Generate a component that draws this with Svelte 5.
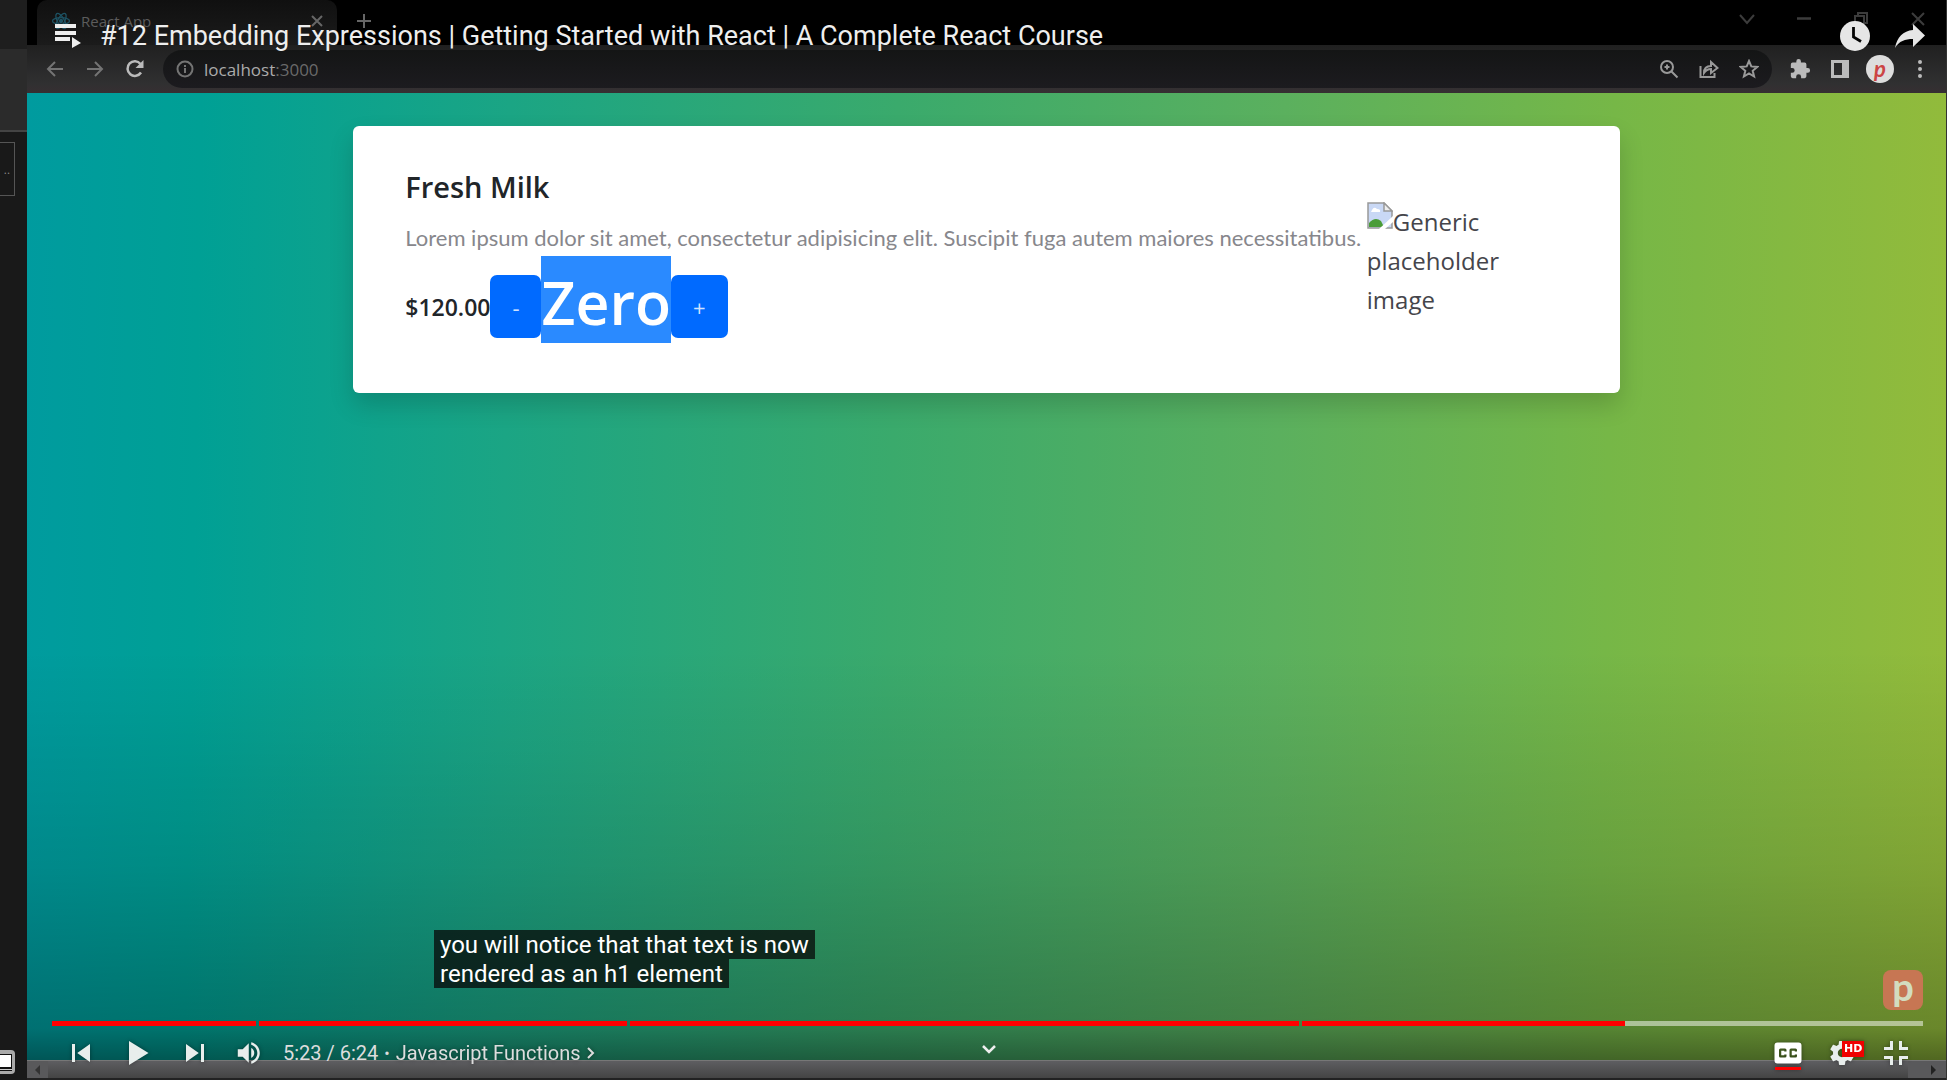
<script>
  const chapters = [
    { share: 204, played: 100 },
    { share: 369, played: 100 },
    { share: 669, played: 100 },
    { share: 622, played: 52 },
  ];
  const captions = ['you will notice that that text is now', 'rendered as an h1 element'];
</script>

<div class="screen">
  <aside class="editor" aria-label="Editor">
    <div class="editor-top"></div>
    <div class="editor-tabs"></div>
    <div class="editor-body">
      <div class="editor-box">..</div>
      <svg class="editor-icon" width="15" height="24" viewBox="0 0 15 24"><path d="M0 0h11q4 0 4 4v16q0 4-4 4H0z" fill="#aaa" /><path d="M0 4h12v17H0z" fill="#111" /><path d="M0 5h11v12H0z" fill="#fff" /><path d="M0 19h12v1H0z" fill="#ccc" /></svg>
    </div>
  </aside>

  <main class="player">
    <div class="browser">
      <div class="tabs">
        <div class="tab">
          <svg width="20" height="20" viewBox="0 0 20 20" fill="none" stroke="#1d5263" stroke-width="1.3"><ellipse cx="10" cy="10" rx="8.5" ry="3.4" /><ellipse cx="10" cy="10" rx="8.5" ry="3.4" transform="rotate(60 10 10)" /><ellipse cx="10" cy="10" rx="8.5" ry="3.4" transform="rotate(120 10 10)" /><circle cx="10" cy="10" r="1.5" fill="#1d5263" /></svg>
          <span class="tab-name">React App</span>
          <button aria-label="Close tab"><svg width="12" height="12" viewBox="0 0 12 12"><path d="M1 1l10 10M11 1L1 11" stroke="#666" stroke-width="2" /></svg></button>
        </div>
        <button class="new-tab" aria-label="New tab"><svg width="16" height="16" viewBox="0 0 16 16"><path d="M8 1v14M1 8h14" stroke="#666" stroke-width="2" /></svg></button>
        <div class="window-buttons">
          <button aria-label="Search tabs"><svg width="16" height="16" viewBox="0 0 16 16"><path d="M1 4l7 8 7-8" /></svg></button>
          <button aria-label="Minimize"><svg width="16" height="16" viewBox="0 0 16 16"><path d="M1 7.500h14" stroke-width="2.500" /></svg></button>
          <button aria-label="Restore"><svg width="16" height="16" viewBox="0 0 16 16"><path d="M2 5h9v10H2zM5 5V2h9v10h-3" /></svg></button>
          <button aria-label="Close"><svg width="16" height="16" viewBox="0 0 16 16"><path d="M2 2l12 12M14 2L2 14" /></svg></button>
        </div>
      </div>
      <div class="toolbar">
        <button aria-label="Back"><svg width="18" height="18" viewBox="0 0 18 18" class="dim"><path d="M17 9H2M9 2L2 9l7 7" /></svg></button>
        <button aria-label="Forward"><svg width="18" height="18" viewBox="0 0 18 18" class="dim"><path d="M1 9h15M9 2l7 7-7 7" /></svg></button>
        <button aria-label="Reload"><svg width="20" height="20" viewBox="0 0 20 20" class="bright"><path d="M16 13.500A7.300 7.300 0 1 1 15.500 5" stroke-width="2.500" /><path d="M18.500 1v8h-8z" fill="#bbb" stroke="none" /></svg></button>
        <div class="address">
          <svg width="18" height="18" viewBox="0 0 18 18" class="dim"><circle cx="9" cy="9" r="7.500" /><path d="M9 8v5M9 5v2" /></svg>
          <span class="url">localhost<span>:3000</span></span>
          <button aria-label="Zoom"><svg width="20" height="20" viewBox="0 0 20 20"><circle cx="8" cy="8" r="6" /><path d="M12.500 12.500l6 6M8 5.500v5M5.500 8h5" /></svg></button>
          <button aria-label="Share page"><svg width="20" height="20" viewBox="0 0 20 20"><path d="M1.500 7v11h14v-4M5 14c0-5 3-7 7-7V3l6.500 6-6.500 5v-4c-3 0-5 1-7 4z" /></svg></button>
          <button aria-label="Bookmark"><svg width="20" height="20" viewBox="0 0 20 20"><path d="M10 2l2.300 5.400 5.900.5-4.500 3.900 1.400 5.700-5.100-3-5.100 3 1.400-5.700L1.800 7.900l5.900-.5z" /></svg></button>
        </div>
        <div class="extensions">
          <button aria-label="Extensions"><svg width="22" height="22" viewBox="0 0 24 24"><path fill="#bbb" stroke="none" d="M20.500 11H19V7a2 2 0 0 0-2-2h-4V3.500a2.500 2.500 0 0 0-5 0V5H4a2 2 0 0 0-2 2v3.800h1.500a2.700 2.700 0 0 1 0 5.400H2V20a2 2 0 0 0 2 2h3.800v-1.500a2.700 2.700 0 0 1 5.400 0V22H17a2 2 0 0 0 2-2v-4h1.500a2.500 2.500 0 0 0 0-5z" /></svg></button>
          <button aria-label="Side panel"><svg width="20" height="20" viewBox="0 0 20 20"><path fill="#bbb" fill-rule="evenodd" stroke="none" d="M1 1h18v18H1zM4 4v12h8V4z" /></svg></button>
          <button class="avatar" aria-label="Profile">p</button>
          <button aria-label="Menu"><svg width="20" height="20" viewBox="0 0 20 20"><g fill="#bbb" stroke="none"><circle cx="10" cy="3" r="2" /><circle cx="10" cy="10" r="2" /><circle cx="10" cy="17" r="2" /></g></svg></button>
        </div>
      </div>

      <div class="page">
        <article class="card">
          <div class="details">
            <h2>Fresh Milk</h2>
            <p>Lorem ipsum dolor sit amet, consectetur adipisicing elit. Suscipit fuga autem maiores necessitatibus.</p>
            <div class="quantity">
              <span class="price">$120.00</span>
              <button class="minus">-</button>
              <h1>Zero</h1>
              <button class="plus">+</button>
            </div>
          </div>
          <div class="picture">
            <svg width="26" height="27" viewBox="0 0 26 27"><path d="M1 1h16l8 8v17H1z" fill="#c9d8f5" stroke="#999" stroke-width="1.500" /><path d="M5 8q2-4 5-1 4 0 3 3H4z" fill="#fff" /><path d="M2 25v-4q6-7 12-2l3 6z" fill="#4a9c38" /><path d="M17 1v8h8z" fill="#eee" stroke="#999" stroke-width="1.500" /><path d="M12 27L26 14v6l-8 7z" fill="#fff" /></svg>Generic placeholder image
          </div>
        </article>
      </div>
      <div class="scrollbar">
        <span><svg width="6" height="10" viewBox="0 0 6 10"><path d="M5 0v10L0 5z" fill="#333" /></svg></span>
        <span class="end"><svg width="6" height="10" viewBox="0 0 6 10"><path d="M0 0v10l5-5z" fill="#222" /></svg></span>
      </div>
    </div>

    <header class="top-bar">
      <button aria-label="Playlist"><svg width="28" height="26" viewBox="0 0 28 26"><path d="M1 1h21v4H1zM1 8h21v4H1zM1 14h15v4H1zM18 14v11l9-5z" fill="#eee" /></svg></button>
      <a href="#video">#12 Embedding Expressions | Getting Started with React | A Complete React Course</a>
      <button aria-label="Watch later"><svg width="30" height="30" viewBox="0 0 30 30"><circle cx="15" cy="15" r="15" fill="#e6e6e6" /><path d="M13.500 6v10l7.500 4.500" fill="none" stroke="#050505" stroke-width="2.800" /></svg></button>
      <button aria-label="Share"><svg width="32" height="30" viewBox="0 0 32 30"><path d="M19 3l12 11.500L19 26v-8C11 18 5 20 1 27 3 16 9 10 19 9z" fill="#e6e6e6" /></svg></button>
    </header>

    <footer class="controls">
      <div class="caption">
        {#each captions as line}<span>{line}</span>{/each}
      </div>
      <div class="watermark">p</div>
      <div class="progress">
        {#each chapters as chapter}
          <div class="chapter" style="flex-grow: {chapter.share}"><div style="width: {chapter.played}%"></div></div>
        {/each}
      </div>
      <div class="buttons">
        <div class="group">
          <button aria-label="Previous"><svg viewBox="0 0 36 36"><path d="m12 12h2v12h-2zm3.500 6 8.500 6V12z" /></svg></button>
          <button aria-label="Play"><svg viewBox="0 0 36 36"><path d="M12 10v16l13-8z" /></svg></button>
          <button aria-label="Next"><svg viewBox="0 0 36 36"><path d="M12 24l8.500-6L12 12zM22 12v12h2V12z" /></svg></button>
          <button class="volume" aria-label="Mute"><svg viewBox="0 0 36 36"><path d="M8 21h4l5 5V10l-5 5H8zM19 14v8c1.480-.68 2.500-2.230 2.500-4s-1.020-3.260-2.500-4zM19 11.290c2.890.86 5 3.540 5 6.710s-2.110 5.850-5 6.710v2.060c4.010-.91 7-4.490 7-8.770s-2.990-7.860-7-8.770z" /></svg></button>
          <span class="time">5:23 / 6:24</span>
          <span class="dot">•</span>
          <button class="chapter-name">Javascript Functions <svg width="9" height="14" viewBox="0 0 9 14"><path d="M1 2l5 5-5 5" fill="none" stroke="#ddd" stroke-width="2" /></svg></button>
        </div>
        <button class="more" aria-label="More videos"><svg width="14" height="10" viewBox="0 0 14 10"><path d="M1 2l6 6 6-6" fill="none" stroke="#eee" stroke-width="2.500" /></svg></button>
        <div class="group right">
          <button class="cc" aria-label="Subtitles"><svg viewBox="0 0 36 36"><path fill="#fff" fill-rule="evenodd" d="M11 11a2 2 0 0 0-2 2v10a2 2 0 0 0 2 2h14a2 2 0 0 0 2-2V13a2 2 0 0 0-2-2zM17 17h-1.500v-.5h-2v3h2V19H17v1a1 1 0 0 1-1 1h-3a1 1 0 0 1-1-1v-4a1 1 0 0 1 1-1h3a1 1 0 0 1 1 1zM24 17h-1.500v-.5h-2v3h2V19H24v1a1 1 0 0 1-1 1h-3a1 1 0 0 1-1-1v-4a1 1 0 0 1 1-1h3a1 1 0 0 1 1 1z" /></svg></button>
          <button class="settings" aria-label="Settings"><svg viewBox="0 0 36 36"><path d="m23.940 18.780c.03-.25.05-.51.05-.78 0-.27-.02-.52-.05-.78l1.680-1.320c.15-.12.19-.33.09-.51l-1.600-2.760c-.09-.17-.31-.24-.48-.17l-1.990.8c-.41-.32-.86-.58-1.350-.78l-.30-2.120c-.02-.19-.19-.33-.39-.33l-3.200 0c-.2 0-.36.14-.39.33l-.30 2.120c-.48.2-.93.47-1.350.78l-1.990-.8c-.18-.07-.39 0-.48.17l-1.600 2.760c-.10.17-.05.39.09.51l1.680 1.320c-.03.25-.05.52-.05.78 0 .26.02.52.05.78l-1.680 1.320c-.15.12-.19.33-.09.51l1.600 2.760c.09.17.31.24.48.17l1.990-.8c.41.32.86.58 1.350.78l.30 2.120c.02.19.19.33.39.33l3.200 0c.2 0 .36-.14.39-.33l.30-2.120c.48-.2.93-.47 1.350-.78l1.990.8c.18.07.39 0 .48-.17l1.600-2.760c.09-.17.05-.39-.09-.51l-1.680-1.320zm-5.940 2.010c-1.540 0-2.800-1.250-2.800-2.800 0-1.540 1.250-2.800 2.800-2.800 1.540 0 2.800 1.250 2.800 2.800 0 1.540-1.250 2.800-2.800 2.800z" /></svg><span class="hd">HD</span></button>
          <button aria-label="Exit full screen"><svg viewBox="0 0 36 36"><path d="M14 14h-4v2h6v-6h-2zM22 14v-4h-2v6h6v-2zM20 26h2v-4h4v-2h-6zM10 22h4v4h2v-6h-6z" /></svg></button>
        </div>
      </div>
    </footer>
  </main>
</div>

<style>
  :global(body) { background: #000; }
  .screen { display: flex; min-height: 100vh; font-family: Roboto, sans-serif; }
  button { display: flex; align-items: center; justify-content: center; border: 0; padding: 0; background: none; color: inherit; font: inherit; cursor: pointer; }
  svg { flex: none; }

  .editor { display: flex; flex-direction: column; flex: none; width: 27px; background: #191919; }
  .editor-top { height: 49px; background: #1e1e1e; }
  .editor-tabs { height: 81px; background: #2b2b2b; border-bottom: 2px solid #444; }
  .editor-body { display: flex; flex: 1; flex-direction: column; justify-content: space-between; align-items: flex-start; padding: 10px 0 6px; }
  .editor-box { width: 14px; height: 52px; border: 1px solid #555; border-left: 0; color: #888; font-size: 12px; line-height: 54px; text-align: center; }

  .player { position: relative; display: flex; flex: 1; min-width: 0; border-right: 1px solid #333; }
  .browser { display: flex; flex: 1; flex-direction: column; min-width: 0; font-family: "Open Sans", "Noto Sans", sans-serif; }
  .tabs { display: flex; height: 45px; background: #000; color: #5c5c5c; }
  .tab { display: flex; align-items: center; gap: 10px; box-sizing: border-box; width: 300px; margin-left: 10px; padding: 0 14px 4px; border-radius: 10px 10px 0 0; background: linear-gradient(#101010, #1b1b1b); font-size: 15px; }
  .tab-name { flex: 1; }
  .new-tab { width: 54px; padding-bottom: 4px; }
  .window-buttons { display: flex; margin-left: auto; padding: 0 0 8px; }
  .window-buttons button { width: 57px; }
  .window-buttons svg { fill: none; stroke: #3c3c3c; stroke-width: 2; }
  .toolbar { display: flex; align-items: center; height: 48px; padding: 0 0 0 8px; background: linear-gradient(#202020, #303031 80%, #362f32); }
  .toolbar > button { width: 40px; }
  .toolbar svg { fill: none; stroke: #999; stroke-width: 2; }
  .toolbar .dim { stroke: #747474; }
  .toolbar .bright { stroke: #bbb; }
  .address { display: flex; flex: 1; align-items: center; height: 38px; margin-left: 8px; padding: 0 3px 0 13px; border-radius: 19px; background: linear-gradient(#141515, #1c1b1f); }
  .address button { width: 40px; }
  .url { flex: 1; margin-left: 10px; color: #ababab; font-size: 17px; }
  .url span { color: #6a6a6a; }
  .extensions { display: flex; align-items: center; padding: 0 6px 0 8px; }
  .extensions button { width: 40px; }
  .extensions .avatar { width: 28px; height: 28px; margin: 0 6px; border-radius: 50%; background: #ddd; color: #c44; font: italic 700 22px/24px Lato, sans-serif; }

  .page { display: flex; flex: 1; align-items: flex-start; justify-content: center; padding-top: 33px; background: linear-gradient(91deg, #009b9f 0%, #00a095 9%, #1ba584 25%, #3aaa6c 45%, #5bb05e 65%, #76b747 82%, #93bb3b 100%); }
  .card { display: flex; align-items: center; box-sizing: border-box; width: 66%; padding: 42px 53px 36px 52px; border-radius: 6px; background: #fff; box-shadow: 0 12px 24px rgba(0, 0, 0, 0.16); color: #212529; }
  .details { flex: 1; min-width: 0; }
  h1, h2, p { margin: 0; }
  h2 { margin-bottom: 14px; font-size: 29px; font-weight: 600; line-height: 38px; }
  p { color: #87878c; font-family: Lato, sans-serif; font-size: 22px; line-height: 36px; white-space: nowrap; }
  .quantity { display: flex; align-items: center; }
  .price { font-size: 23px; font-weight: 600; }
  h1 { margin-bottom: 14px; padding-top: 5px; background: #2a8aff; color: #fff; font-size: 59px; font-weight: 600; line-height: 82px; }
  .quantity button { height: 63px; border-radius: 7px; background: #006aff; color: #cfe2ff; font-size: 22px; }
  .minus { width: 51px; }
  .plus { width: 57px; }
  .picture { width: 147px; padding: 0 53px 5px 0; color: #45454b; font-size: 24px; line-height: 39px; }
  .picture svg { vertical-align: 2px; }
  .scrollbar { display: flex; justify-content: space-between; height: 17px; border-top: 1px solid #777; border-bottom: 2px solid #222; background: linear-gradient(#5e5e61, #444); }
  .scrollbar span { display: flex; align-items: center; justify-content: center; width: 21px; background: #59595b; }
  .scrollbar .end { width: 24px; padding-left: 14px; }

  .top-bar { position: absolute; inset: 0 0 auto; display: flex; align-items: center; height: 60px; padding: 12px 20px 0 27px; box-sizing: border-box; gap: 24px; }
  .top-bar a { flex: 1; margin-left: -6px; color: #eee; font-size: 27px; line-height: 36px; text-decoration: none; }

  .controls { position: absolute; inset: auto 0 0; display: flex; flex-direction: column; box-sizing: border-box; padding: 280px 23px 0 25px; background: linear-gradient(rgba(0, 0, 0, 0), rgba(0, 0, 0, 0.12) 50%, rgba(0, 0, 0, 0.28) 88%, rgba(0, 0, 0, 0.45) calc(100% - 20px), rgba(0, 0, 0, 0) calc(100% - 20px)); }
  .caption { display: flex; flex-direction: column; align-items: flex-start; margin-left: 382px; color: #fff; font-size: 24px; line-height: 28px; }
  .caption span { padding: 1px 6px 0; background: rgba(8, 8, 8, 0.75); }
  .watermark { display: flex; align-items: center; justify-content: center; align-self: flex-end; box-sizing: border-box; width: 40px; height: 40px; margin: -18px 0 11px; padding-bottom: 8px; border-radius: 8px; background: #c77653; color: #d3dcbf; font: 700 38px/32px Lato, sans-serif; }
  .progress { display: flex; gap: 3px; height: 5px; }
  .chapter { flex: 1 1 0; background: rgba(255, 255, 255, 0.5); }
  .chapter div { height: 100%; background: #f00; }
  .buttons { display: flex; align-items: center; height: 54px; color: #ddd; font-size: 20px; }
  .group { display: flex; flex: 1 1 0; align-items: center; padding-left: 2px; }
  .group button { width: 54px; height: 54px; margin-right: 3px; filter: drop-shadow(0 0 2px rgba(0, 0, 0, 0.4)); }
  .group.right { justify-content: flex-end; padding: 0; }
  .group.right button { position: relative; margin: 0; }
  .group svg { width: 54px; fill: #e8eeec; }
  .group .volume { padding-right: 5px; box-sizing: border-box; }
  .group .volume svg { width: 44px; }
  .time { margin-left: 1px; }
  .dot { margin: 0 6px; font-size: 16px; }
  .group .chapter-name { width: auto; gap: 6px; }
  .group .chapter-name svg { width: 9px; }
  .more { height: 46px; align-self: flex-start; }
  .cc::after { position: absolute; right: 14px; bottom: 10px; left: 14px; height: 3px; background: #f00; content: ""; }
  .hd { position: absolute; top: 15px; left: 27px; padding: 0 2px; background: #f00000; color: #fff; font: 700 11px/16px "DejaVu Sans", sans-serif; }
</style>
